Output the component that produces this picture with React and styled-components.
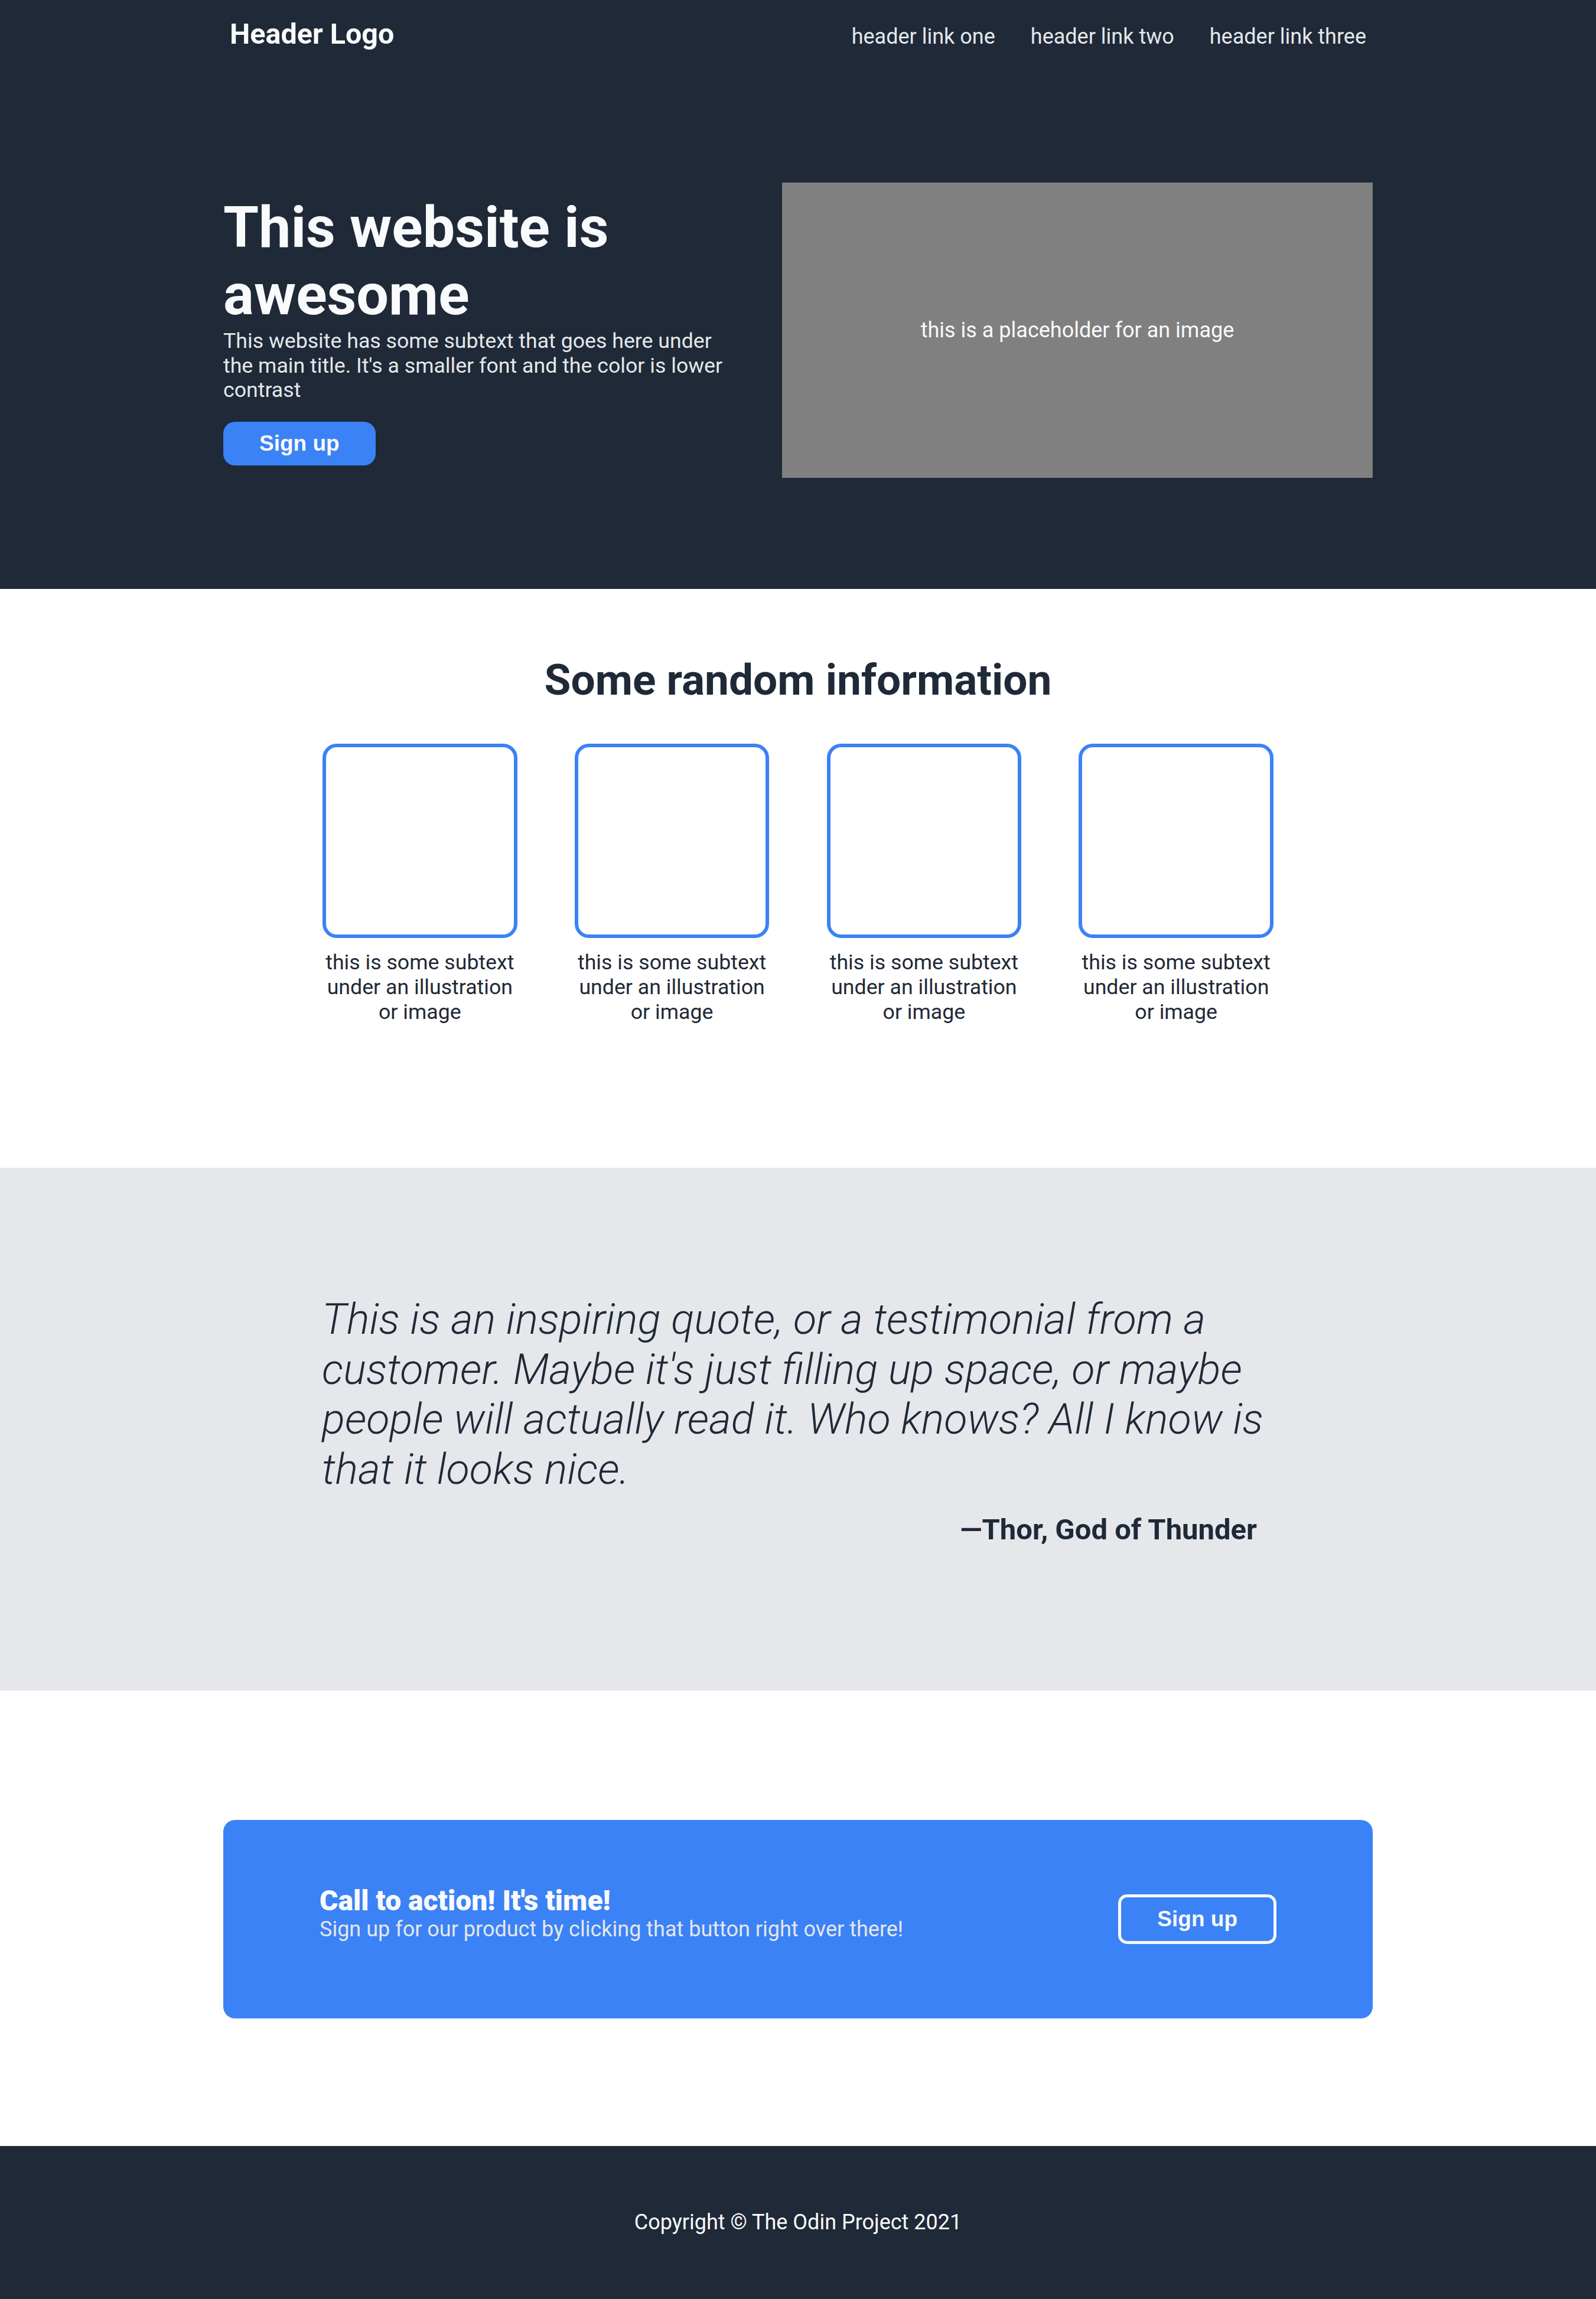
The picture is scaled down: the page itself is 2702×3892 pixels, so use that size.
import React from 'react';
import styled, { createGlobalStyle } from 'styled-components';

const GlobalStyle = createGlobalStyle`
  body {
    margin: 0;
    font-family: Roboto, "Liberation Sans", Arial, sans-serif;
    color: #1f2937;
  }
  * {
    box-sizing: border-box;
  }
`

const features = [1, 2, 3, 4]

const App = () => {
  return (
    <>
      <GlobalStyle />
      <Top>
        <Container>
          <Header>
            <Logo>Header Logo</Logo>
            <Nav>
              <NavLink href="#">header link one</NavLink>
              <NavLink href="#">header link two</NavLink>
              <NavLink href="#">header link three</NavLink>
            </Nav>
          </Header>
        </Container>
        <Hero>
          <HeroInner>
            <HeroText>
              <HeroTitle>This website is awesome</HeroTitle>
              <Lead>
                This website has some subtext that goes here under the main title. It's a smaller font and the color is lower contrast
              </Lead>
              <Button $variant="primary">Sign up</Button>
            </HeroText>
            <ImagePlaceholder>this is a placeholder for an image</ImagePlaceholder>
          </HeroInner>
        </Hero>
      </Top>

      <InfoSection>
        <SectionTitle>Some random information</SectionTitle>
        <CardRow>
          {features.map((n) => (
            <Card key={n}>
              <Illustration />
              <Caption>this is some subtext under an illustration or image</Caption>
            </Card>
          ))}
        </CardRow>
      </InfoSection>

      <QuoteSection>
        <Quote>
          <QuoteText>
            This is an inspiring quote, or a testimonial from a customer. Maybe it's just filling up space, or maybe people will actually read it. Who knows? All I know is that it looks nice.
          </QuoteText>
          <Attribution>—Thor, God of Thunder</Attribution>
        </Quote>
      </QuoteSection>

      <CtaSection>
        <Container>
          <CtaBox>
            <CtaText>
              <CtaTitle>Call to action! It's time!</CtaTitle>
              <CtaSub>Sign up for our product by clicking that button right over there!</CtaSub>
            </CtaText>
            <Button $variant="outline">Sign up</Button>
          </CtaBox>
        </Container>
      </CtaSection>

      <Footer>Copyright © The Odin Project 2021</Footer>
    </>
  )
}

const Container = styled.div`
   width: 1946px;
   margin: 0 auto;
`

const Top = styled.div`
   background-color: #1f2937;
`

const Header = styled.header`
   display: flex;
   justify-content: space-between;
   align-items: baseline;
   padding: 30px 11px;
`

const Logo = styled.div`
   font-size: 48.5px;
   line-height: 1.172;
   font-weight: 700;
   color: #f9fafb;
`

const Nav = styled.nav`
   display: flex;
   gap: 60px;
`

const NavLink = styled.a`
   font-size: 36px;
   line-height: 1.172;
   color: #e5e7eb;
   text-decoration: none;
`

const Hero = styled.section`
   padding: 192px 0 188px;
`

const HeroInner = styled(Container)`
   display: flex;
   align-items: center;
   gap: 79px;
`

const HeroText = styled.div`
   flex: 1;
   display: flex;
   flex-direction: column;
   align-items: flex-start;
`

const HeroTitle = styled.h1`
   margin: 0;
   font-size: 97px;
   line-height: 1.172;
   font-weight: 700;
   color: #f9fafb;
`

const Lead = styled.p`
   margin: 0;
   font-size: 35.7px;
   line-height: 1.172;
   color: #e5e7eb;
`

const Button = styled.button`
   margin-top: ${({ $variant }) => ($variant === 'primary' ? '32px' : '0')};
   padding: 16px 61px;
   font-family: "Liberation Sans", Arial, sans-serif;
   font-size: 37px;
   font-weight: 700;
   color: #f9fafb;
   background-color: ${({ $variant }) => ($variant === 'primary' ? '#3b82f6' : 'transparent')};
   border: ${({ $variant }) => ($variant === 'primary' ? 'none' : '5px solid #f9fafb')};
   border-radius: ${({ $variant }) => ($variant === 'primary' ? '20px' : '15px')};

   &:hover {
     cursor: pointer;
   }
`

const ImagePlaceholder = styled.div`
   flex: none;
   width: 1000px;
   height: 500px;
   display: flex;
   align-items: center;
   justify-content: center;
   background-color: #808080;
   color: #f9fafb;
   font-size: 36px;
`

const InfoSection = styled.section`
   padding: 112px 0 242px;
`

const SectionTitle = styled.h2`
   margin: 0 0 64.5px;
   text-align: center;
   font-size: 73px;
   line-height: 1.172;
   font-weight: 700;
   color: #1f2937;
`

const CardRow = styled.div`
   display: flex;
   justify-content: center;
   gap: 97.4px;
`

const Card = styled.div`
   width: 329.4px;
   display: flex;
   flex-direction: column;
   align-items: center;
`

const Illustration = styled.div`
   width: 329.4px;
   height: 329.4px;
   border: 6px solid #3b82f6;
   border-radius: 24px;
`

const Caption = styled.p`
   margin: 21px 0 0;
   text-align: center;
   font-size: 35.7px;
   line-height: 1.172;
   color: #1f2937;
`

const QuoteSection = styled.section`
   background-color: #e5e7eb;
   padding: 215.7px 0 244.4px;
`

const Quote = styled.figure`
   width: 1612px;
   margin: 0 auto;
`

const QuoteText = styled.blockquote`
   margin: 0;
   font-size: 72.4px;
   line-height: 1.166;
   font-weight: 300;
   font-style: italic;
   color: #1f2937;
`

const Attribution = styled.figcaption`
   margin-top: 30.5px;
   padding-right: 29px;
   text-align: right;
   font-size: 49px;
   line-height: 1.172;
   font-weight: 700;
   color: #1f2937;
`

const CtaSection = styled.section`
   padding: 218.7px 0 216.3px;
`

const CtaBox = styled.div`
   height: 336px;
   padding: 0 163px;
   display: flex;
   align-items: center;
   justify-content: space-between;
   background-color: #3b82f6;
   border-radius: 20px;
`

const CtaText = styled.div`
   margin-bottom: 20px;
`

const CtaTitle = styled.h3`
   margin: 0;
   font-size: 48px;
   line-height: 1.12;
   font-weight: 900;
   color: #f9fafb;
`

const CtaSub = styled.p`
   margin: 0;
   font-size: 36px;
   line-height: 1.172;
   color: #e5e7eb;
`

const Footer = styled.footer`
   padding: 108px 0;
   background-color: #1f2937;
   text-align: center;
   font-size: 36px;
   line-height: 1.172;
   color: #f9fafb;
`

export default App;
